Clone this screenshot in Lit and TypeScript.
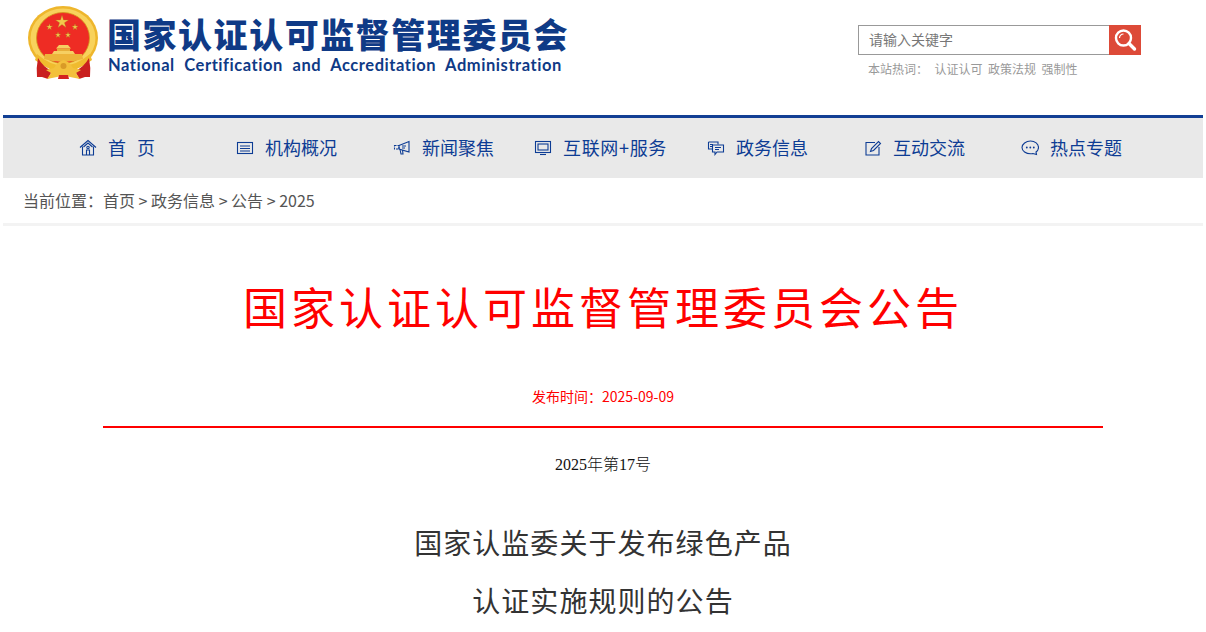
import { LitElement, html, css, svg } from "lit";
import { customElement } from "lit/decorators.js";

const star = (cx: number, cy: number, r: number) => {
  const pts: string[] = [];
  for (let i = 0; i < 10; i++) {
    const a = -Math.PI / 2 + (i * Math.PI) / 5;
    const rr = i % 2 ? r * 0.38 : r;
    pts.push(`${(cx + rr * Math.cos(a)).toFixed(2)},${(cy + rr * Math.sin(a)).toFixed(2)}`);
  }
  return svg`<polygon points=${pts.join(" ")} fill="#f2c84b" stroke="#a9761c" stroke-width=".3"/>`;
};

const emblem = html`<svg class="emblem" viewBox="0 0 70 76" width="70" height="76">
  <ellipse cx="35" cy="33" rx="35" ry="32" fill="#eeb62c"/>
  <ellipse cx="35" cy="33" rx="32.500" ry="29.500" fill="#f8d25c"/>
  <ellipse cx="35" cy="33" rx="26.500" ry="25.500" fill="#ee2c24" stroke="#d3961b" stroke-width=".8"/>
  ${star(34, 17, 6.8)}${star(21.5, 22, 3.3)}${star(47, 22, 3.3)}${star(30, 30, 3)}${star(40, 30, 3)}
  <path d="M31 40 H40 L43 43.500 H28 Z" fill="#f6cf62"/>
  <rect x="29" y="43.500" width="13" height="2.500" fill="#e7ad38"/>
  <path d="M26 46 H45 L47 49 H24 Z" fill="#f6cf62"/>
  <path d="M17 49 H54 L55 54 Q35 60 16 54 Z" fill="#edb43a"/>
  <path d="M9 49 Q35 72 62 49 L64 55 Q35 78 7 55 Z" fill="#f0bb2e"/>
  <path d="M10 53 Q8 63 9 72 L14 72 L20 74 L24 66 Q15 62 10 53 Z" fill="#c9201f"/>
  <path d="M61 53 Q63 63 62 72 L57 72 L51 74 L47 66 Q56 62 61 53 Z" fill="#c9201f"/>
  <path d="M26 63 Q30 56 35.500 55 Q41 56 45 63 L53 65 L48 68 L52 74 L42 72 L35.500 70 L29 72 L19 74 L23 68 L18 65 Z" fill="#f3c13c"/>
  <path d="M31 70 H40 L41 74 H30 Z" fill="#d3231f"/>
  <circle cx="35.500" cy="61" r="3" fill="#d99b27"/>
</svg>`;

const ic = (body: unknown) => html`<svg class="ic" viewBox="0 0 18 18" width="18" height="18" fill="none" stroke="currentColor" stroke-width="1.1">${body}</svg>`;

const icons = [
  ic(svg`<path d="M1 8.500 L9 1.500 L17 8.500"/><path d="M3.500 7.500 V16 H14.500 V7.500"/><path d="M4.500 8 L9 4 L13.500 8"/><circle cx="9" cy="8.500" r="1.200"/><path d="M7.500 16 V11 H10.500 V16"/>`),
  ic(svg`<rect x="1.500" y="3.500" width="15" height="11"/><path d="M4 7 H14 M4 9.500 H14 M4 12 H14"/>`),
  ic(svg`<path d="M6 6.500 L16 2.500 V13 L6 10 Z"/><path d="M1.500 6.500 H6 V10 H1.500 Z" stroke-dasharray="2 1"/><path d="M7 10.500 L8 15 H10 L9.500 11"/><path d="M9 7 H13 M9 9 H12"/>`),
  ic(svg`<rect x="1.500" y="2.500" width="15" height="11"/><rect x="4" y="5" width="10" height="6"/><path d="M6 15.500 H12"/>`),
  ic(svg`<path d="M1.500 3 H11 V5.500" /><path d="M1.500 3 V10 H5"/><path d="M3 5.500 H6 M3 7.500 H5"/><path d="M5.500 6 H16.500 V13 H10 L8 15.500 V13 H5.500 Z"/><path d="M8 8.500 H14 M8 10.500 H12"/>`),
  ic(svg`<path d="M11 3.500 H2 V16 H15 V8"/><path d="M6.500 12.500 L7.500 9.500 L14.500 2.500 L16.500 4.500 L9.500 11.500 Z"/>`),
  ic(svg`<path d="M9.500 2 C14 2 17.500 5 17.500 8.500 C17.500 10.500 16.500 12 15 13 L15.500 15.500 L12 14.500 C11 14.800 10.300 14.800 9.500 14.800 C5 14.800 1 12 1 8.500 C1 5 5 2 9.500 2 Z"/><circle cx="5.800" cy="8.500" r=".9" fill="currentColor" stroke="none"/><circle cx="9.300" cy="8.500" r=".9" fill="currentColor" stroke="none"/><circle cx="12.800" cy="8.500" r=".9" fill="currentColor" stroke="none"/>`),
];

const navItems = ["首 页", "机构概况", "新闻聚焦", "互联网+服务", "政务信息", "互动交流", "热点专题"];

@customElement("app-root")
export class AppRoot extends LitElement {
  static styles = css`
    :host {
      display: block;
      height: 632px;
      overflow: hidden;
      background: #fff;
      font-family: "Noto Sans CJK SC", "Liberation Sans", sans-serif;
    }
    .page { width: 1200px; margin: 0 auto; }
    .head {
      height: 115px;
      display: flex;
      justify-content: space-between;
      border-bottom: 3px solid #123f94;
    }
    .brand { display: flex; gap: 9px; padding: 5px 0 0 25px; align-items: flex-start; }
    .emblem { display: block; flex: none; }
    .names { display: flex; flex-direction: column; padding-top: 9px; }
    .cn {
      font-size: 34px;
      line-height: 40px;
      font-weight: 900;
      letter-spacing: 1.540px;
      color: #0f3a86;
      white-space: nowrap;
    }
    .en {
      font-family: "Lato", sans-serif;
      font-size: 16.500px;
      line-height: 20px;
      margin-top: 1px;
      font-weight: 700;
      letter-spacing: .55px;
      word-spacing: 5px;
      color: #0f3a86;
      padding-left: 1px;
      white-space: nowrap;
    }
    .search { width: 283px; margin-right: 62px; padding-top: 25px; }
    .box { display: flex; height: 30px; }
    .input {
      flex: 1;
      box-sizing: border-box;
      border: 1px solid #999;
      border-right: 0;
      padding-left: 10px;
      font-size: 14px;
      line-height: 27px;
      color: #777;
    }
    .btn {
      width: 32px;
      background: #dd4a38;
      display: flex;
      align-items: center;
      justify-content: center;
    }
    .hot {
      display: flex;
      padding: 5px 0 0 10px;
      font-size: 12px;
      line-height: 18px;
      color: #999;
      gap: 5.500px;
    }
    .hot .lead { margin-right: 1px; }
    nav {
      height: 60px;
      background: #e9e9e9;
      display: grid;
      grid-template-columns: repeat(7, 157px);
      padding-left: 48.500px;
    }
    .item {
      display: flex;
      align-items: center;
      justify-content: center;
      gap: 10px;
      box-sizing: border-box;
      padding-bottom: 2px;
      color: #0d3c94;
      font-size: 18px;
      white-space: pre;
    }
    .item.first { padding-right: 25px; word-spacing: 7px; }
    .item.wide { letter-spacing: .65px; }
    .ic { display: block; flex: none; margin: 1px 1px 0 -1px; }
    .crumb {
      height: 45px;
      padding-left: 20px;
      font-size: 16px;
      line-height: 45px;
      color: #555;
      border-bottom: 3px solid #f3f3f3;
    }
    article { width: 1000px; margin: 0 auto; text-align: center; }
    h1 {
      margin: 0;
      padding-top: 48px;
      font-size: 44px;
      line-height: 64px;
      font-weight: 400;
      letter-spacing: 4px;
      color: #f00;
    }
    .date {
      margin-top: 46px;
      padding-bottom: 18px;
      font-size: 14px;
      line-height: 24px;
      color: #f00;
      border-bottom: 2px solid #f00;
    }
    .num {
      margin: 25px 0 0;
      font-family: "Liberation Serif", "Noto Sans CJK SC", serif;
      font-size: 16px;
      line-height: 24px;
      font-weight: 300;
      color: #111;
    }
    h2 {
      margin: 37px 0 0;
      font-size: 28px;
      line-height: 57.600px;
      font-weight: 400;
      letter-spacing: 1.050px;
      color: #333;
    }
  `;

  render() {
    return html`<div class="page">
      <header class="head">
        <div class="brand">
          ${emblem}
          <div class="names">
            <div class="cn">国家认证认可监督管理委员会</div>
            <div class="en">National Certification and Accreditation Administration</div>
          </div>
        </div>
        <div class="search">
          <div class="box">
            <div class="input">请输入关键字</div>
            <div class="btn">
              <svg viewBox="0 0 24 24" width="24" height="24" fill="none" stroke="#fff">
                <circle cx="10.500" cy="10" r="7.500" stroke-width="2.400"/>
                <path d="M6.500 10 A4 4 0 0 1 10.500 6" stroke-width="1.200"/>
                <path d="M16 15.500 L21.500 21" stroke-width="3.400" stroke-linecap="round"/>
              </svg>
            </div>
          </div>
          <div class="hot"><span class="lead">本站热词：</span><span>认证认可</span><span>政策法规</span><span>强制性</span></div>
        </div>
      </header>
      <nav>
        ${navItems.map(
          (t, i) => html`<div class="item ${i === 0 ? "first" : ""} ${i === 3 ? "wide" : ""}">${icons[i]}<span>${t}</span></div>`
        )}
      </nav>
      <div class="crumb">当前位置：首页 &gt; 政务信息 &gt; 公告 &gt; 2025</div>
      <article>
        <h1>国家认证认可监督管理委员会公告</h1>
        <div class="date">发布时间：2025-09-09</div>
        <p class="num">2025年第17号</p>
        <h2>国家认监委关于发布绿色产品<br />认证实施规则的公告</h2>
      </article>
    </div>`;
  }
}
